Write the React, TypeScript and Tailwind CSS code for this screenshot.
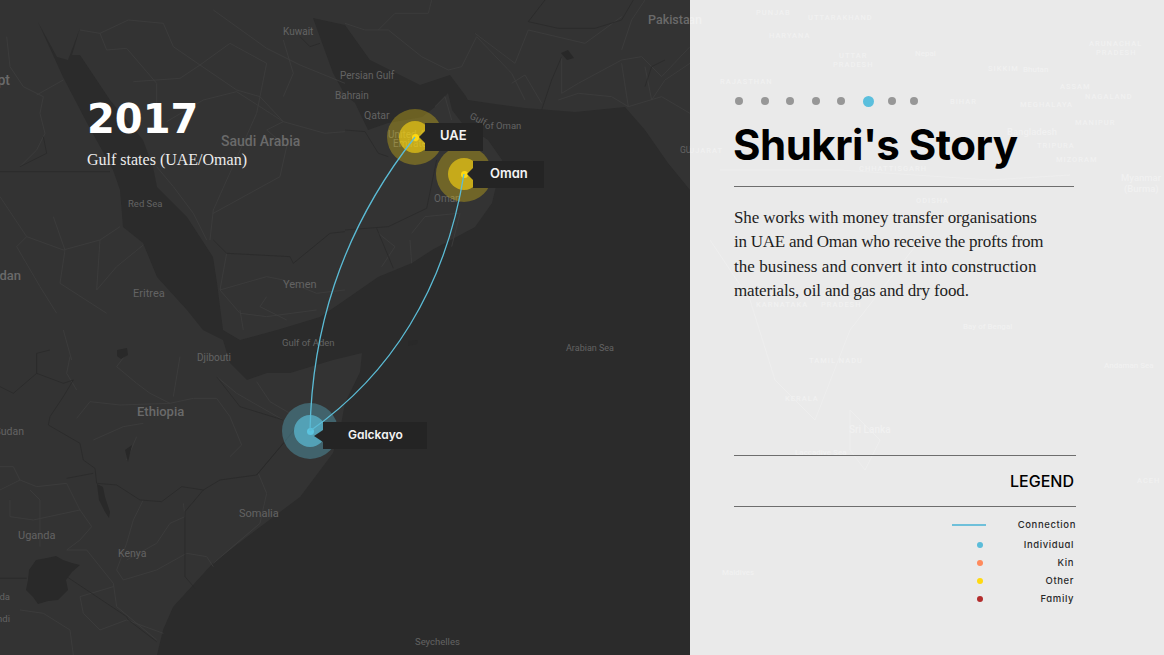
const WATER =
  "M313 18 L345 25 L370 60 L420 85 L450 75 L465 95 L468 100 L495 104 L525 108 L575 112 L625 107 L645 130 L668 163 L690 190 L690 655 L157 655 L163 630 L173 607 L213 563 L260 527 L300 497 L333 453 L340 430 L345 403 L360 372 L362 353 L333 360 L290 373 L267 373 L247 380 L230 363 L223 340 L203 330 L187 310 L157 277 L143 243 L123 227 L120 190 L113 170 L87 123 L63 77 L38 22 L57 57 L68 60 L80 28 L72 55 L80 55 L110 100 L143 140 L153 167 L157 187 L187 217 L213 257 L217 283 L223 330 L240 340 L277 330 L320 317 L345 300 L378 277 L412 263 L432 250 L475 227 L492 203 L502 160 L488 140 L462 123 L452 110 L448 93 L435 107 L422 117 L388 123 L368 130 L355 103 L345 95 L333 73 Z";

const ROADS_NW = [
  "M240 90 L300 100 L320 150 L380 145 L440 215 L470 250 L470 330",
  "M300 100 L385 60 L490 70 L520 140 L600 195 L710 270 L780 290 L850 365 L975 400 L1035 395",
  "M600 195 L690 130 L800 190 L780 290 L770 340 L640 630 L630 720",
  "M400 245 L540 235 L600 195",
  "M500 365 L610 300 L710 275 L850 365 L800 390 L860 440 L840 530 L640 640",
  "M20 110 L30 200 L70 260 L130 290 L120 340 L135 400 L110 450 L60 500",
  "M110 285 L190 240",
  "M0 590 L80 710 L50 740 L120 860 L170 940",
  "M80 710 L190 750 L300 720 L360 680",
  "M160 650 L195 750 L180 850 L320 940",
  "M300 720 L290 870 L350 800 L430 735",
  "M680 760 L660 870 L800 830 L850 840 L950 880 L1035 870",
  "M660 870 L720 940 L800 950 L950 930",
  "M720 930 L730 990",
  "M800 890 L780 920 L860 960",
  "M640 30 L800 145 L900 195 L1035 250",
  "M470 500 L520 560 L580 640 L620 720",
  "M850 120 L880 220 L850 290",
];
const BORDERS_NW = [
  "M0 515 L330 515",
  "M640 720 L680 760 L870 770 L880 790 L990 700 L1035 695",
  "M60 500 L100 480 L140 460 L130 410",
  "M900 110 L930 140 L960 130",
];
const ROADS_NE = [
  "M0 70 L60 90 L130 90 L230 170 L310 210 L350 200 L395 110 L500 220 L540 300",
  "M390 100 L510 190 L550 90 L720 130 L830 50",
  "M500 250 L540 225 L590 310",
  "M650 170 L650 280 L700 250 L830 180 L890 170 L950 230 L1035 140",
  "M830 190 L850 320 L950 290 L1035 340",
  "M640 300 L700 280 L800 290 L850 320",
  "M900 0 L860 60 L830 150",
  "M900 200 L920 300 L960 240 L1035 190",
  "M260 0 L250 40 L150 40 L100 90",
  "M200 700 L240 650 L340 640",
  "M195 720 L200 790",
  "M100 700 L150 740 L110 800",
  "M345 640 L320 740",
  "M270 320 L300 290 L320 360",
];
const BORDERS_NE = [
  "M550 65 L640 85 L750 85 L830 60 L865 0",
  "M550 65 L600 0",
  "M590 330 L620 240 L650 170",
  "M0 690 L130 680 L245 625 L275 480",
  "M95 685 L145 805",
  "M0 390 L60 395 L100 460 L130 470",
  "M900 260 L920 200 L960 180",
];
const ROADS_SW = [
  "M380 70 L350 110 L410 160 L450 190 L510 220 L580 205 L650 205 L690 260 L725 345 L690 380",
  "M230 265 L270 215 L360 225 L510 220",
  "M280 330 L370 290 L430 280",
  "M410 320 L380 390",
  "M650 140 L710 190 L850 270",
  "M770 155 L810 215 L870 250",
  "M540 80 L520 200",
  "M775 430 L800 490 L780 580 L640 700",
  "M0 480 L60 450 L110 470 L200 460 L240 540 L275 590 L240 630 L200 660 L260 660 L340 760 L350 830 L470 930",
  "M30 510 L30 560 L100 570 L240 540",
  "M120 650 L120 510 L90 480",
  "M430 510 L400 570 L380 640 L350 720 L370 750 L470 720 L560 670 L620 680 L640 710",
  "M550 520 L555 560 L510 580 L470 640 L380 690",
  "M340 770 L240 800 L250 850 L300 900 L380 870 L490 910",
  "M60 840 L130 850 L210 900 L220 975",
  "M0 410 L40 410 L60 450",
  "M210 80 L200 130 L230 180",
  "M190 0 L215 90",
];
const BORDERS_SW = [
  "M150 60 L110 70 L110 130 L190 160 L220 150 L190 200 L150 260 L145 285 L240 340 L250 390 L285 415 L290 460 L350 465 L420 510 L485 515 L545 470 L610 480 L660 450 L770 435 L850 340",
  "M0 170 L40 190 L110 130",
  "M610 480 L555 545 L555 740 L585 775",
  "M200 445 L280 430",
  "M770 435 L850 340 L890 290",
  "M650 140 L720 230 L850 270",
  "M200 740 L380 860 L385 870 L470 935",
  "M0 745 L80 745",
];

const MAP_LABELS = [
  { t: "Egypt", x: 10, y: 85, s: 14, end: true },
  { t: "Kuwait", x: 283, y: 35, s: 10 },
  { t: "Persian Gulf", x: 340, y: 79, s: 10 },
  { t: "Bahrain", x: 335, y: 99, s: 10 },
  { t: "Qatar", x: 364, y: 119, s: 10.5 },
  { t: "United Arab", x: 388, y: 138, s: 10 },
  { t: "Emirates", x: 393, y: 147, s: 10 },
  { t: "Saudi Arabia", x: 221, y: 146, s: 14 },
  { t: "Red Sea", x: 128, y: 207, s: 9.5 },
  { t: "Sudan", x: 21, y: 280, s: 13, end: true },
  { t: "Eritrea", x: 133, y: 297, s: 11 },
  { t: "Yemen", x: 283, y: 288, s: 11 },
  { t: "Gulf of Aden", x: 282, y: 346, s: 9.5 },
  { t: "Djibouti", x: 197, y: 361, s: 10 },
  { t: "Ethiopia", x: 137, y: 416, s: 13 },
  { t: "South Sudan", x: 24, y: 435, s: 10.5, end: true },
  { t: "Somalia", x: 239, y: 517, s: 11 },
  { t: "Uganda", x: 18, y: 539, s: 11 },
  { t: "Kenya", x: 118, y: 557, s: 10.5 },
  { t: "Rwanda", x: 10, y: 600, s: 9.5, end: true },
  { t: "Burundi", x: 10, y: 622, s: 9.5, end: true },
  { t: "Arabian Sea", x: 566, y: 351, s: 9 },
  { t: "Seychelles", x: 415, y: 645, s: 9.5 },
  { t: "Pakistan", x: 648, y: 24, s: 12.5 },
  { t: "Oman", x: 434, y: 202, s: 10 },
  { t: "of Oman", x: 485, y: 129, s: 9.5 },
  { t: "GUJARAT", x: 680, y: 153, s: 8.5 },
];

const PANEL_LABELS = [
  { t: "Pakistan", x: 12, y: 24, s: 12.5, end: true },
  { t: "PUNJAB", x: 66, y: 15, s: 7.5 },
  { t: "UTTARAKHAND", x: 118, y: 20, s: 7.5 },
  { t: "HARYANA", x: 79, y: 38, s: 7.5 },
  { t: "UTTAR", x: 149, y: 58, s: 7.5 },
  { t: "PRADESH", x: 143, y: 67, s: 7.5 },
  { t: "Nepal", x: 225, y: 56, s: 8 },
  { t: "ARUNACHAL", x: 399, y: 46, s: 7.5 },
  { t: "PRADESH", x: 406, y: 55, s: 7.5 },
  { t: "SIKKIM", x: 298, y: 71, s: 7.5 },
  { t: "Bhutan", x: 333, y: 72, s: 8 },
  { t: "RAJASTHAN", x: 30, y: 84, s: 7.5 },
  { t: "ASSAM", x: 370, y: 89, s: 7.5 },
  { t: "NAGALAND", x: 395, y: 99, s: 7.5 },
  { t: "BIHAR", x: 260, y: 104, s: 7.5 },
  { t: "MEGHALAYA", x: 330, y: 107, s: 7.5 },
  { t: "MANIPUR", x: 385, y: 125, s: 7.5 },
  { t: "Bangladesh", x: 317, y: 135, s: 9.5 },
  { t: "TRIPURA", x: 347, y: 148, s: 7.5 },
  { t: "GUJARAT", x: 33, y: 153, s: 7.5, end: true },
  { t: "MIZORAM", x: 366, y: 162, s: 7.5 },
  { t: "CHHATTISGARH", x: 169, y: 171, s: 7.5 },
  { t: "Myanmar", x: 431, y: 181, s: 9.5 },
  { t: "(Burma)", x: 434, y: 192, s: 9.5 },
  { t: "ODISHA", x: 226, y: 203, s: 7.5 },
  { t: "KARNATAKA", x: 66, y: 307, s: 7.5 },
  { t: "PRADESH", x: 131, y: 307, s: 7.5 },
  { t: "Bay of Bengal", x: 273, y: 329, s: 8 },
  { t: "TAMIL NADU", x: 119, y: 363, s: 7.5 },
  { t: "Andaman Sea", x: 414, y: 368, s: 8 },
  { t: "KERALA", x: 95, y: 401, s: 7.5 },
  { t: "Sri Lanka", x: 159, y: 433, s: 10 },
  { t: "Laccadive Sea", x: 105, y: 455, s: 8 },
  { t: "ACEH", x: 447, y: 483, s: 7.5 },
  { t: "Maldives", x: 32, y: 575, s: 8 },
];

const LEGEND = [
  { label: "Individual", color: "bg-[#5bbcd9]", row: "h-[18px] mt-[2px]" },
  { label: "Kin", color: "bg-[#ff8a5c]", row: "h-[18px]" },
  { label: "Other", color: "bg-[#ffd911]", row: "h-[18px]" },
  { label: "Family", color: "bg-[#b32d2d]", row: "h-[18px]" },
];

function Lines({
  roads,
  borders,
  transform,
}: {
  roads: string[];
  borders: string[];
  transform: string;
}) {
  return (
    <g transform={transform} fill="none" strokeLinejoin="round">
      {roads.map((d) => (
        <path key={d} d={d} stroke="#3e3e3e" strokeWidth="2.4" />
      ))}
      {borders.map((d) => (
        <path key={d} d={d} stroke="#292929" strokeWidth="2.4" />
      ))}
    </g>
  );
}

function MapDrawing() {
  return (
    <svg viewBox="0 0 690 655" className="absolute inset-0 h-full w-full">
      <path d={WATER} fill="#2b2b2b" />
      <Lines roads={ROADS_NW} borders={BORDERS_NW} transform="scale(0.3333)" />
      <Lines roads={ROADS_NE} borders={BORDERS_NE} transform="translate(345 0) scale(0.3333)" />
      <Lines roads={ROADS_SW} borders={BORDERS_SW} transform="translate(0 330) scale(0.3333)" />
      <path
        d="M408 341 L418 340 L417 344 L408 346 Z M29 570 L36 560 L47 558 L56 556 L63 560 L72 563 L80 565 L72 572 L66 580 L68 590 L58 600 L48 601 L38 604 L33 597 L26 590 L28 580 Z M97 484 L103 487 L105 497 L110 512 L109 518 L105 512 L99 500 Z M117 350 L127 348 L128 355 L121 359 L117 356 Z"
        fill="#292929"
      />
      <path d="M561 53 L568 50 L574 58 L567 60 Z M125 450 L132 445 L128 462 Z" fill="#282828" />
      {MAP_LABELS.map((l) => (
        <text
          key={l.t}
          x={l.x}
          y={l.y}
          fontSize={l.s}
          textAnchor={l.end ? "end" : "start"}
          fontWeight={l.s > 11 ? 500 : 400}
          fill={l.s > 11 ? "#6a6a6a" : "#636363"}
          fontFamily="Roboto, sans-serif"
        >
          {l.t}
        </text>
      ))}
      <text
        x="469"
        y="118"
        fontSize="9.5"
        fill="#636363"
        fontFamily="Roboto, sans-serif"
        transform="rotate(28 469 118)"
      >
        Gulf
      </text>
    </svg>
  );
}

function Arcs() {
  return (
    <svg viewBox="0 0 690 655" className="absolute inset-0 h-full w-full" fill="none">
      <path d="M310 431 C312 335 338 235 415 137" stroke="#5bbcd6" strokeWidth="1.3" />
      <path d="M310 431 C390 375 445 290 464 174" stroke="#5bbcd6" strokeWidth="1.3" />
    </svg>
  );
}

function Pulse({ tone, className }: { tone: "yellow" | "teal"; className: string }) {
  const yellow = tone === "yellow";
  return (
    <div
      className={`absolute flex h-14 w-14 items-center justify-center rounded-full ${className} ${
        yellow ? "bg-[#ffd911]/30" : "bg-[#5bbcd6]/35"
      }`}
    >
      <div
        className={`flex h-8 w-8 items-center justify-center rounded-full ${
          yellow ? "bg-[#ffd911]/60" : "bg-[#5bbcd6]/70"
        }`}
      >
        <div className={`h-[7px] w-[7px] rounded-full ${yellow ? "bg-[#ffd911]" : "bg-[#5bc4e0]"}`} />
      </div>
    </div>
  );
}

function PlaceTag({
  label,
  className,
  notch,
  text,
}: {
  label: string;
  className: string;
  notch: string;
  text: string;
}) {
  return (
    <div
      className={`absolute flex items-center bg-[#242424] pb-[2px] font-['Inter',sans-serif] font-semibold text-[#f4f4f4] [font-feature-settings:'cv11'] ${className}`}
    >
      <div className={`absolute h-0 w-0 border-y-[6px] border-y-transparent border-r-[#242424] ${notch}`} />
      <span className={text}>{label}</span>
    </div>
  );
}

export default function App() {
  return (
    <div className="flex h-[655px] w-[1164px] overflow-hidden bg-[#eaeaea]">
      <div className="relative h-full w-[690px] shrink-0 overflow-hidden bg-[#333333]">
        <MapDrawing />
        <Pulse tone="yellow" className="left-[387px] top-[109px]" />
        <Pulse tone="yellow" className="left-[436px] top-[146px]" />
        <Pulse tone="teal" className="left-[282px] top-[403px]" />
        <Arcs />
        <PlaceTag
          label="UAE"
          className="left-[425px] top-[123px] h-[28px] w-[58px]"
          notch="-left-[6px] top-[8px] border-r-[6px]"
          text="pl-[15px] text-[13px]"
        />
        <PlaceTag
          label="Oman"
          className="left-[473px] top-[161px] h-[27px] w-[71px]"
          notch="-left-[6px] top-[7px] border-r-[6px]"
          text="pl-[17px] text-[13px]"
        />
        <PlaceTag
          label="Galckayo"
          className="left-[323px] top-[422px] h-[27px] w-[104px]"
          notch="-left-[9px] top-[8px] border-r-[9px]"
          text="pl-[25px] text-[12px]"
        />
        <div className="absolute left-[87px] top-[97px] text-white">
          <div className="font-['DejaVu_Sans',sans-serif] text-[40px] font-bold leading-[44px]">2017</div>
          <div className="mt-[9px] font-['Liberation_Serif',serif] text-[16px] leading-[20px] text-[#ededed]">
            Gulf states (UAE/Oman)
          </div>
        </div>
      </div>

      <div className="relative h-full flex-1 pl-[44px] pr-[88px] pt-[95px]">
        <svg viewBox="0 0 474 655" className="absolute inset-0 h-full w-full">
          <g fill="none" stroke="#eeeeee" strokeWidth="1">
            <path d="M30 170 L150 170 L300 180 L380 175 M20 240 L60 300 L85 380 L125 420 L160 330 L230 240 M160 410 L190 440 L175 470 L160 450 Z" />
          </g>
          {PANEL_LABELS.map((l) => (
            <text
              key={l.t + l.x}
              x={l.x}
              y={l.y}
              fontSize={l.s}
              textAnchor={l.end ? "end" : "start"}
              letterSpacing={l.s < 8 ? 1 : 0}
              fontWeight={500}
              fill="#f1f1f1"
              fontFamily="Roboto, sans-serif"
            >
              {l.t}
            </text>
          ))}
        </svg>

        <div className="relative">
          <div className="flex h-[12px] items-center pl-[1px]">
            <div className="h-2 w-2 rounded-full bg-[#979797]" />
            <div className="ml-[17.5px] h-2 w-2 rounded-full bg-[#979797]" />
            <div className="ml-[17.5px] h-2 w-2 rounded-full bg-[#979797]" />
            <div className="ml-[17.5px] h-2 w-2 rounded-full bg-[#979797]" />
            <div className="ml-[17.5px] h-2 w-2 rounded-full bg-[#979797]" />
            <div className="ml-[17.5px] h-[11px] w-[11px] rounded-full bg-[#5bbfdd]" />
            <div className="ml-[14px] h-2 w-2 rounded-full bg-[#979797]" />
            <div className="ml-[14px] h-2 w-2 rounded-full bg-[#979797]" />
          </div>

          <h1 className="mt-[10px] -ml-[1px] whitespace-nowrap font-['Inter',sans-serif] text-[42px] font-bold leading-[56px] tracking-[-0.5px] text-black">
            Shukri's Story
          </h1>
          <div className="mt-[13px] h-px w-[340px] bg-[#6e6e6e]" />
          <div className="mt-[19px] w-[340px] whitespace-nowrap font-['Liberation_Serif',serif] text-[17px] leading-[24.3px] text-[#1d1d1d]">
            <p className="tracking-[-0.1px]">She works with money transfer organisations</p>
            <p className="tracking-[-0.25px]">in UAE and Oman who receive the profts from</p>
            <p className="tracking-[0.07px]">the business and convert it into construction</p>
            <p className="tracking-[-0.14px]">materials, oil and gas and dry food.</p>
          </div>

          <div className="mt-[152px] h-px w-[342px] bg-[#6e6e6e]" />
          <div className="flex h-[50px] w-[342px] items-center justify-end pr-[2px] font-['Inter',sans-serif] text-[16px] font-medium text-black">
            LEGEND
          </div>
          <div className="h-px w-[342px] bg-[#6e6e6e]" />

          <div className="w-[342px] pt-[9px] font-['Inter',sans-serif] text-[9.5px] font-medium tracking-[0.6px] text-[#2a2a2a] [font-feature-settings:'cv11']">
            <div className="flex h-[18px] items-center justify-end">
              <div className="h-[2px] w-[34px] bg-[#6fc0da]" />
              <div className="w-[90px] text-right">Connection</div>
            </div>
            {LEGEND.map((item) => (
              <div key={item.label} className={`flex items-center justify-end ${item.row}`}>
                <div className="flex w-[34px] justify-end pr-[3px]">
                  <div className={`h-[6px] w-[6px] rounded-full ${item.color}`} />
                </div>
                <div className="w-[90px] pr-[2px] text-right">{item.label}</div>
              </div>
            ))}
          </div>
        </div>
      </div>
    </div>
  );
}
